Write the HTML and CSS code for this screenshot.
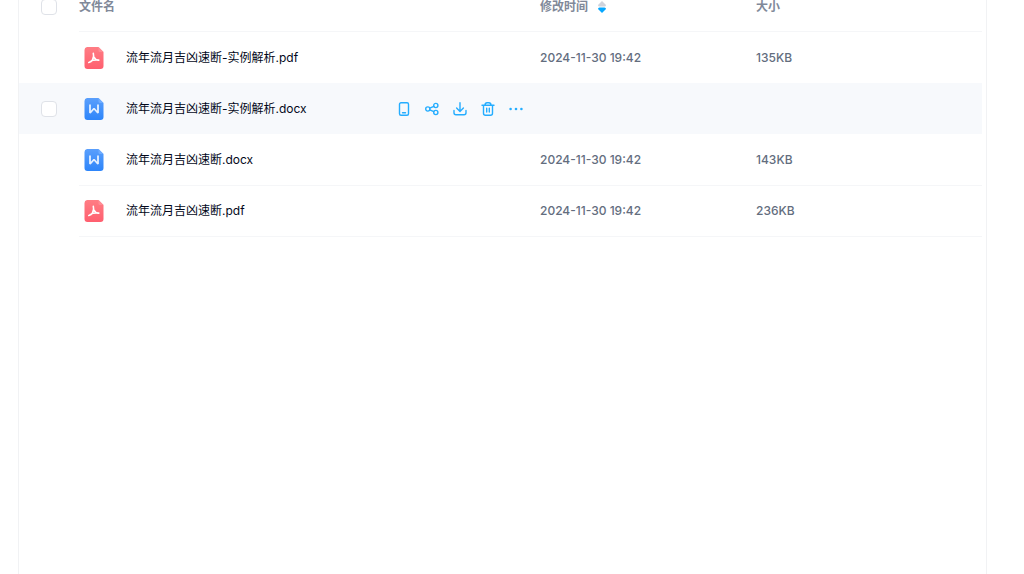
FILE: index.html
```html
<!DOCTYPE html>
<html lang="zh-CN">
<head>
<meta charset="utf-8">
<title>文件列表</title>
<link rel="stylesheet" href="styles.css">
</head>
<body>
<svg class="defs" aria-hidden="true">
  <defs>
    <linearGradient id="red" x1="0" y1="0" x2="0" y2="1"><stop offset="0" stop-color="#ff7d84"/><stop offset="1" stop-color="#ff5f6f"/></linearGradient>
    <linearGradient id="blue" x1="0" y1="0" x2="0" y2="1"><stop offset="0" stop-color="#5a9ffc"/><stop offset="1" stop-color="#2d85fa"/></linearGradient>
    <symbol id="pdf" viewBox="0 0 20 22">
      <path fill="url(#red)" d="M3 0h11.5L19.500 5v14a3 3 0 0 1-3 3H3.500a3 3 0 0 1-3-3V3a3 3 0 0 1 2.500-3z"/>
      <path fill="#ff8c94" d="M14.500 0v3.500q0 1.500 1.500 1.500h3.500z"/>
      <path fill="none" stroke="#fff" stroke-width="1.600" stroke-linecap="round" stroke-linejoin="round" d="M9.300 6.300c.8 2.400.5 4.400-.8 6.500-.9 1.500-2 2.300-3.700 2.700M9.700 9.800c1 2 2.700 3.200 5.100 3.300M6 14.600c2.300-1.300 5-1.800 8.500-1.400"/>
    </symbol>
    <symbol id="doc" viewBox="0 0 20 22">
      <path fill="url(#blue)" d="M3 0h11.500L19.500 5v14a3 3 0 0 1-3 3H3.500a3 3 0 0 1-3-3V3a3 3 0 0 1 2.500-3z"/>
      <path fill="#6eacff" d="M14.500 0v3.500q0 1.500 1.500 1.500h3.500z"/>
      <path fill="none" stroke="#e4f0ff" stroke-width="1.800" stroke-linejoin="bevel" d="M6 6.500v8.500l4-4.500 4 4.500V6.500"/>
    </symbol>
  </defs>
</svg>
<main class="panel">
  <table class="files">
    <colgroup><col class="col-check"><col><col class="col-time"><col class="col-size"></colgroup>
    <thead>
      <tr>
        <th class="pick"><input class="check" type="checkbox" aria-label="全选"></th>
        <th>文件名</th>
        <th><button class="sort" type="button">修改时间
          <svg width="8" height="12" viewBox="0 0 8 12" aria-hidden="true"><path fill="#d0d3dc" d="M4 0l4 4q0 1.500-1.500 1.500h-5Q0 5.500 0 4z"/><path fill="#06a7ff" d="M1.500 6.500h5Q8 6.500 8 8l-4 4-4-4q0-1.500 1.500-1.500z"/></svg>
        </button></th>
        <th>大小</th>
      </tr>
    </thead>
    <tbody>
      <tr>
        <td class="pick"></td>
        <td><div class="name"><svg class="type" aria-hidden="true"><use href="#pdf"/></svg><a class="link" href="#">流年流月吉凶速断-实例解析.pdf</a></div></td>
        <td>2024-11-30 19:42</td>
        <td>135KB</td>
      </tr>
      <tr class="active">
        <td class="pick"><input class="check" type="checkbox" aria-label="选择文件"></td>
        <td><div class="name"><svg class="type" aria-hidden="true"><use href="#doc"/></svg><a class="link" href="#">流年流月吉凶速断-实例解析.docx</a>
          <div class="actions">
            <button class="act" type="button" aria-label="发送到手机"><svg viewBox="0 0 14 14"><rect x="2.500" y=".8" width="9" height="12.400" rx="1.500"/><path d="M5.500 10.700h3"/></svg></button>
            <button class="act" type="button" aria-label="分享"><svg viewBox="0 0 14 14"><circle cx="2.800" cy="7" r="2.100"/><circle cx="10.800" cy="3.500" r="2.100"/><circle cx="10.800" cy="10.500" r="2.100"/><path d="M4.800 6.200l4-1.800M4.800 7.800l4 1.800"/></svg></button>
            <button class="act" type="button" aria-label="下载"><svg viewBox="0 0 14 14"><path d="M7 .7v8.600M3.600 6L7 9.400 10.400 6M1 8.500v2.200q0 2 2 2h8q2 0 2-2V8.500"/></svg></button>
            <button class="act" type="button" aria-label="删除"><svg viewBox="0 0 14 14"><path d="M1 3.300h12M4 3q.2-2.200 2-2.200h2q1.800 0 2 2.200M2.500 3.500v7.700q0 2 2 2h5q2 0 2-2V3.500M5.700 6.300v3.800M8.300 6.300v3.800"/></svg></button>
            <button class="act" type="button" aria-label="更多"><svg viewBox="0 0 14 14"><g class="dots"><circle cx="1.600" cy="7" r="1.300"/><circle cx="7" cy="7" r="1.300"/><circle cx="12.400" cy="7" r="1.300"/></g></svg></button>
          </div></div></td>
        <td></td>
        <td></td>
      </tr>
      <tr>
        <td class="pick"></td>
        <td><div class="name"><svg class="type" aria-hidden="true"><use href="#doc"/></svg><a class="link" href="#">流年流月吉凶速断.docx</a></div></td>
        <td>2024-11-30 19:42</td>
        <td>143KB</td>
      </tr>
      <tr>
        <td class="pick"></td>
        <td><div class="name"><svg class="type" aria-hidden="true"><use href="#pdf"/></svg><a class="link" href="#">流年流月吉凶速断.pdf</a></div></td>
        <td>2024-11-30 19:42</td>
        <td>236KB</td>
      </tr>
    </tbody>
  </table>
</main>
</body>
</html>
```
FILE: styles.css
```css
* { box-sizing: border-box; }
html, body { height: 100%; }
body {
  margin: 0;
  overflow: hidden;
  background: #fff;
  color: #636d7e;
  font: 12px/18px Inter, "Noto Sans CJK SC", sans-serif;
}
.defs { position: absolute; width: 0; height: 0; }
/* The list is scrolled so that the header is partly out of view. */
.panel {
  min-height: calc(100% + 20px);
  margin: -20px 37px 0 18px;
  padding-right: 4px;
  border: solid #f1f2f4;
  border-width: 0 1px;
}
.files {
  width: 100%;
  table-layout: fixed;
  border-collapse: separate;
  border-spacing: 0;
}
.col-check { width: 60px; }
.col-time { width: 216px; }
.col-size { width: 226px; }
th, td {
  height: 51px;
  padding: 0;
  text-align: left;
  vertical-align: middle;
}
td { font-weight: 500; }
th {
  height: 52px;
  padding-top: 2px;
  border-bottom: 1px solid #f5f6f8;
  color: #818999;
  font-weight: 700;
}
tbody tr:last-child > td:not(.pick) {
  height: 52px;
  border: solid #f5f6f8;
  border-width: 1px 0;
}
.pick { padding-left: 22px; border: 0; }
.active td { background: #f7f9fc; }
.check {
  display: block;
  appearance: none;
  width: 16px;
  height: 16px;
  margin: 0;
  border: 1px solid #dfe2e8;
  border-radius: 4px;
  background: #fff;
}
.sort {
  display: flex;
  align-items: center;
  gap: 10px;
  padding: 0;
  border: 0;
  background: none;
  color: inherit;
  font: inherit;
}
.name { display: flex; align-items: center; }
.type { flex: none; width: 20px; height: 22px; margin: 0 22px 0 5px; }
.link { color: #03081a; font-weight: 400; text-decoration: none; white-space: nowrap; }
.actions { display: flex; gap: 14px; margin: 0 17px 0 auto; }
.act { width: 14px; height: 14px; padding: 0; border: 0; background: none; }
.act svg {
  display: block;
  width: 14px;
  height: 14px;
  fill: none;
  stroke: #25adff;
  stroke-width: 1.4;
  stroke-linecap: round;
  stroke-linejoin: round;
}
.act .dots { fill: #25adff; stroke: none; }
```
